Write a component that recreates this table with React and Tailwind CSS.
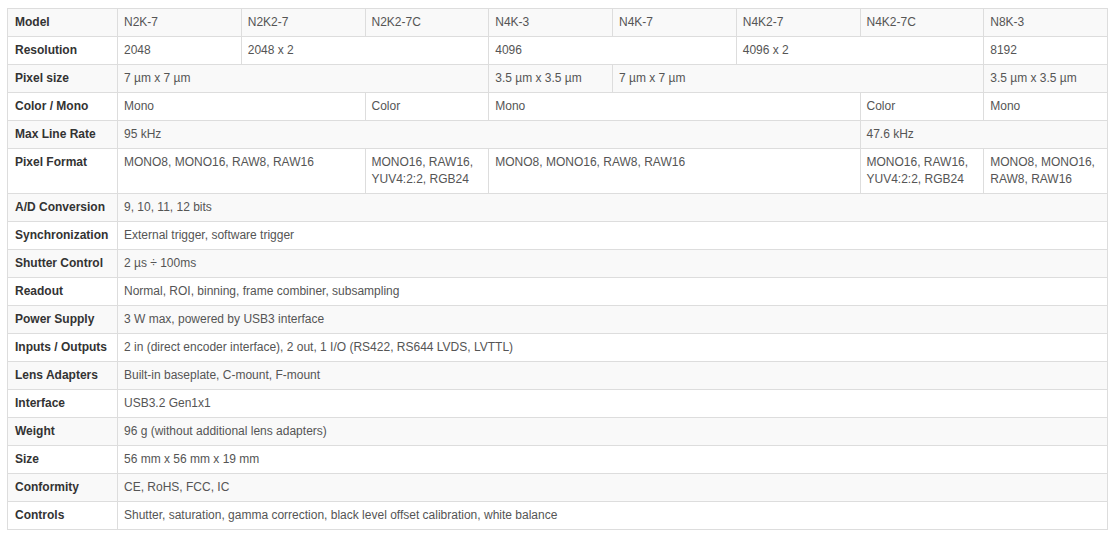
import React from "react";

const models = ["N2K-7", "N2K2-7", "N2K2-7C", "N4K-3", "N4K-7", "N4K2-7", "N4K2-7C", "N8K-3"];

const rows = [
  ["Resolution", [["2048", 1], ["2048 x 2", 2], ["4096", 2], ["4096 x 2", 2], ["8192", 1]]],
  ["Pixel size", [["7 µm x 7 µm", 3], ["3.5 µm x 3.5 µm", 1], ["7 µm x 7 µm", 3], ["3.5 µm x 3.5 µm", 1]]],
  ["Color / Mono", [["Mono", 2], ["Color", 1], ["Mono", 3], ["Color", 1], ["Mono", 1]]],
  ["Max Line Rate", [["95 kHz", 6], ["47.6 kHz", 2]]],
  ["Pixel Format", [
    ["MONO8, MONO16, RAW8, RAW16", 2],
    ["MONO16, RAW16, YUV4:2:2, RGB24", 1],
    ["MONO8, MONO16, RAW8, RAW16", 3],
    ["MONO16, RAW16, YUV4:2:2, RGB24", 1],
    ["MONO8, MONO16, RAW8, RAW16", 1],
  ]],
  ["A/D Conversion", [["9, 10, 11, 12 bits", 8]]],
  ["Synchronization", [["External trigger, software trigger", 8]]],
  ["Shutter Control", [["2 µs ÷ 100ms", 8]]],
  ["Readout", [["Normal, ROI, binning, frame combiner, subsampling", 8]]],
  ["Power Supply", [["3 W max, powered by USB3 interface", 8]]],
  ["Inputs / Outputs", [["2 in (direct encoder interface), 2 out, 1 I/O (RS422, RS644 LVDS, LVTTL)", 8]]],
  ["Lens Adapters", [["Built-in baseplate, C-mount, F-mount", 8]]],
  ["Interface", [["USB3.2 Gen1x1", 8]]],
  ["Weight", [["96 g (without additional lens adapters)", 8]]],
  ["Size", [["56 mm x 56 mm x 19 mm", 8]]],
  ["Conformity", [["CE, RoHS, FCC, IC", 8]]],
  ["Controls", [["Shutter, saturation, gamma correction, black level offset calibration, white balance", 8]]],
];

const tdBase = "border border-[#dddddd] px-[6px] py-[5px] align-top text-[12px] leading-[17px]";

export default function App() {
  return (
    <div className="bg-white pt-[8px] pl-[7px] min-h-[541px]" style={{ fontFamily: '"Liberation Sans", Arial, sans-serif' }}>
      <table className="w-[1101px] table-fixed border-collapse">
        <colgroup>
          <col className="w-[110px]" />
          {models.map((m, i) => (
            <col key={i} />
          ))}
        </colgroup>
        <tbody>
          <tr className="bg-[#f9f9f9]">
            <td className={`${tdBase} font-bold text-[#333333] pl-[7px]`}>Model</td>
            {models.map((m) => (
              <td key={m} className={`${tdBase} text-[#555555]`}>{m}</td>
            ))}
          </tr>
          {rows.map(([label, cells], ri) => (
            <tr key={label} className={ri % 2 === 1 ? "bg-[#f9f9f9]" : "bg-white"}>
              <td className={`${tdBase} font-bold text-[#333333] pl-[7px]`}>{label}</td>
              {cells.map(([txt, span], ci) => (
                <td key={ci} colSpan={span} className={`${tdBase} text-[#555555]`}>{txt}</td>
              ))}
            </tr>
          ))}
        </tbody>
      </table>
    </div>
  );
}
